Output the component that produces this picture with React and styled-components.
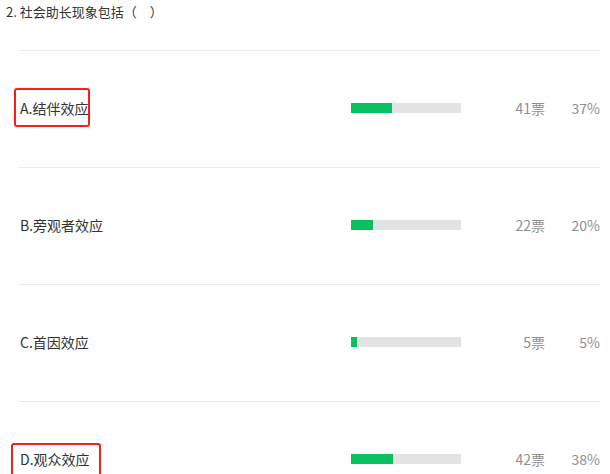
import React from "react";
import styled, { createGlobalStyle } from "styled-components";

const GlobalStyle = createGlobalStyle`
  body {
    margin: 0;
    background: #fff;
    font-family: "Microsoft YaHei", "Noto Sans CJK SC", sans-serif;
  }
`;

const Page = styled.div`
  width: 610px;
  height: 474px;
  overflow: hidden;
  background: #fff;
`;

const Title = styled.div`
  height: 50px;
  padding: 3px 0 0 6px;
  box-sizing: border-box;
  color: #333;
  font-size: 13px;
  line-height: 18px;
`;

const List = styled.div`
  padding: 0 10px 0 19px;
`;

const Row = styled.div`
  display: grid;
  grid-template-columns: 332px 110px 84px 55px;
  align-items: center;
  height: 116px;
  border-top: 1px solid #ebebeb;
`;

const Label = styled.div`
  position: relative;
  justify-self: start;
  padding-left: 1px;
  color: #333;
  font-size: 14px;
  line-height: 20px;
  margin-top: -3px;
`;

const Mark = styled.span`
  position: absolute;
  left: ${(p) => p.$left}px;
  right: ${(p) => p.$right}px;
  top: ${(p) => p.$top}px;
  bottom: ${(p) => p.$bottom}px;
  border: 2px solid #f5201c;
  border-radius: 3px;
`;

const Track = styled.div`
  height: 10px;
  background: #e2e3e5;
  margin-top: -3px;
`;

const Fill = styled.div`
  height: 100%;
  background: #07c160;
`;

const Num = styled.div`
  text-align: right;
  color: #8f8f8f;
  font-size: 14px;
  line-height: 20px;
  margin-top: -3px;
`;

const options = [
  { label: "A.结伴效应", votes: 41, pct: 37, mark: { left: -5, right: -2, top: -10, bottom: -9 } },
  { label: "B.旁观者效应", votes: 22, pct: 20 },
  { label: "C.首因效应", votes: 5, pct: 5 },
  { label: "D.观众效应", votes: 42, pct: 38, mark: { left: -8, right: -11, top: -6, bottom: -8 } },
];

const App = () => {
  return (
    <Page>
      <GlobalStyle />
      <Title>2. 社会助长现象包括（{"\u3000"}）</Title>
      <List>
        {options.map((o) => (
          <Row key={o.label}>
            <Label>
              {o.label}
              {o.mark && (
                <Mark
                  $left={o.mark.left}
                  $right={o.mark.right}
                  $top={o.mark.top}
                  $bottom={o.mark.bottom}
                />
              )}
            </Label>
            <Track>
              <Fill style={{ width: `${o.pct}%` }} />
            </Track>
            <Num>{o.votes}票</Num>
            <Num>{o.pct}%</Num>
          </Row>
        ))}
      </List>
    </Page>
  );
};

export default App;
